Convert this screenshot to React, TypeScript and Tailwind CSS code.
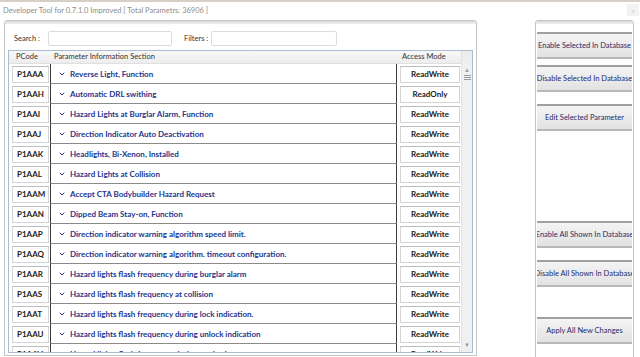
import { ChevronDown } from 'lucide-react';

const rows = [
  ['P1AAA', 'Reverse Light, Function', 'ReadWrite'],
  ['P1AAH', 'Automatic DRL swithing', 'ReadOnly'],
  ['P1AAI', 'Hazard Lights at Burglar Alarm, Function', 'ReadWrite'],
  ['P1AAJ', 'Direction Indicator Auto Deactivation', 'ReadWrite'],
  ['P1AAK', 'Headlights, Bi-Xenon, Installed', 'ReadWrite'],
  ['P1AAL', 'Hazard Lights at Collision', 'ReadWrite'],
  ['P1AAM', 'Accept CTA Bodybuilder Hazard Request', 'ReadWrite'],
  ['P1AAN', 'Dipped Beam Stay-on, Function', 'ReadWrite'],
  ['P1AAP', 'Direction indicator warning algorithm speed limit.', 'ReadWrite'],
  ['P1AAQ', 'Direction indicator warning algorithm. timeout configuration.', 'ReadWrite'],
  ['P1AAR', 'Hazard lights flash frequency during burglar alarm', 'ReadWrite'],
  ['P1AAS', 'Hazard lights flash frequency at collision', 'ReadWrite'],
  ['P1AAT', 'Hazard lights flash frequency during lock indication.', 'ReadWrite'],
  ['P1AAU', 'Hazard lights flash frequency during unlock indication', 'ReadWrite'],
  ['P1AAV', 'Hazard lights flash frequency during panic alarm', 'ReadWrite'],
];

function SideButton({ label, className = '' }: { label: string; className?: string }) {
  return (
    <div
      className={`h-[27px] flex items-center justify-center overflow-hidden whitespace-nowrap border-t-2 border-b-2 border-t-[#a0a0a0] border-b-[#b8b8b8] bg-gradient-to-b from-[#f4f4f4] to-[#e2e2e2] text-[7.5px] text-[#1f2a6b] ${className}`}
    >
      {label}
    </div>
  );
}

export default function App() {
  return (
    <div className="w-[640px] h-[357px] overflow-hidden bg-white relative font-['Lato',sans-serif]">
      <div className="h-[2px] bg-[#d6cfc8]" />
      <div className="h-[18px] flex items-center pl-[3px] text-[7.5px] text-[#8c8c8c] whitespace-nowrap">
        Developer Tool for 0.7.1.0 Improved [ Total Parametrs: 36906 ]
      </div>
      <div className="absolute right-[1px] top-[4px] w-[12px] h-[12px] bg-[#f3f3f3] text-[6px] text-[#d0d0d0] flex items-center justify-center">
        x
      </div>

      <div className="flex">
        {/* left group */}
        <div className="ml-[4px] w-[473px] h-[336px] border border-[#c4c4c4] rounded-t-[3px] flex flex-col">
          <div className="h-[3px] bg-gradient-to-b from-[#d8d8d8] to-[#f0f0f0]" />
          <div className="flex items-center h-[15px] mt-[7px] whitespace-nowrap">
            <span className="ml-[9px] w-[34px] text-[7.5px] text-[#333]">Search :</span>
            <div className="w-[124px] h-[15px] border border-[#dcdcdc] rounded-[2px] bg-white" />
            <span className="ml-[12px] w-[27px] text-[7.5px] text-[#333]">Filters :</span>
            <div className="w-[126px] h-[15px] border border-[#dcdcdc] rounded-[2px] bg-white" />
          </div>

          {/* table */}
          <div className="mt-[4px] ml-[3px] w-[465px] h-[303px] border border-[#a8bcd4] flex overflow-hidden">
            <div className="w-[452px] flex flex-col">
              <div className="h-[13px] flex items-center bg-gradient-to-b from-[#f8f8f8] to-[#ededed] border-b border-[#e0e0e0] text-[7.5px] text-[#333] shrink-0 whitespace-nowrap">
                <span className="w-[41px] pl-[7px]">PCode</span>
                <span className="w-[347px] pl-[4px]">Parameter Information Section</span>
                <span className="pl-[5px]">Access Mode</span>
              </div>
              {rows.map(([code, name, mode]) => (
                <div key={code} className="h-[20px] flex shrink-0">
                  <div className="w-[41px] flex items-center pl-[3px]">
                    <div className="w-[37px] h-[17px] border border-[#d4d4d4] border-t-[#bdbdbd] bg-white flex items-center pl-[4px] text-[8px] font-bold text-[#1a1a1a]">
                      {code}
                    </div>
                  </div>
                  <div className="w-[347px] flex items-center border-l border-r border-b border-l-[#3a3a3a] border-r-[#3a3a3a] border-b-[#8a8a8a] pl-[7px] text-[8px] font-bold text-[#24358c] whitespace-nowrap overflow-hidden">
                    <ChevronDown size={8} strokeWidth={3} className="text-[#24358c] mr-[4px] shrink-0" />
                    {name}
                  </div>
                  <div className="w-[64px] flex items-center pl-[3px]">
                    <div className="w-[60px] h-[17px] border border-[#d4d4d4] border-t-[#bdbdbd] bg-white flex items-center justify-center text-[8px] font-bold text-[#1a1a1a]">
                      {mode}
                    </div>
                  </div>
                </div>
              ))}
            </div>
            {/* scrollbar */}
            <div className="w-[11px] bg-[#f0f0f0] border-l border-[#e2e2e2] flex flex-col items-center">
              <div className="h-[13px] w-full bg-[#ededed]" />
              <div className="mt-[3px] text-[6px] leading-[6px] text-[#9a9a9a]">▲</div>
              <div className="mt-[2px] w-[7px] flex flex-col gap-[1px]">
                <div className="h-[1px] bg-[#999]" />
                <div className="h-[1px] bg-[#999]" />
                <div className="h-[1px] bg-[#999]" />
              </div>
              <div className="flex-1" />
              <div className="mb-[4px] text-[6px] leading-[6px] text-[#9a9a9a]">▼</div>
            </div>
          </div>
        </div>

        {/* right group */}
        <div className="ml-[58px] w-[99px] h-[340px] border border-[#c4c4c4] rounded-t-[3px] flex flex-col px-[1px]">
          <div className="h-[3px] -mx-[1px] bg-gradient-to-b from-[#d8d8d8] to-[#f0f0f0]" />
          <SideButton label="Enable Selected In Database" className="mt-[8px]" />
          <SideButton label="Disable Selected In Database" className="mt-[6px]" />
          <SideButton label="Edit Selected Parameter" className="mt-[12px]" />
          <SideButton label="Enable All Shown In Database" className="mt-[90px]" />
          <SideButton label="Disable All Shown In Database" className="mt-[12px]" />
          <SideButton label="Apply All New Changes" className="mt-[30px]" />
        </div>
      </div>
    </div>
  );
}
